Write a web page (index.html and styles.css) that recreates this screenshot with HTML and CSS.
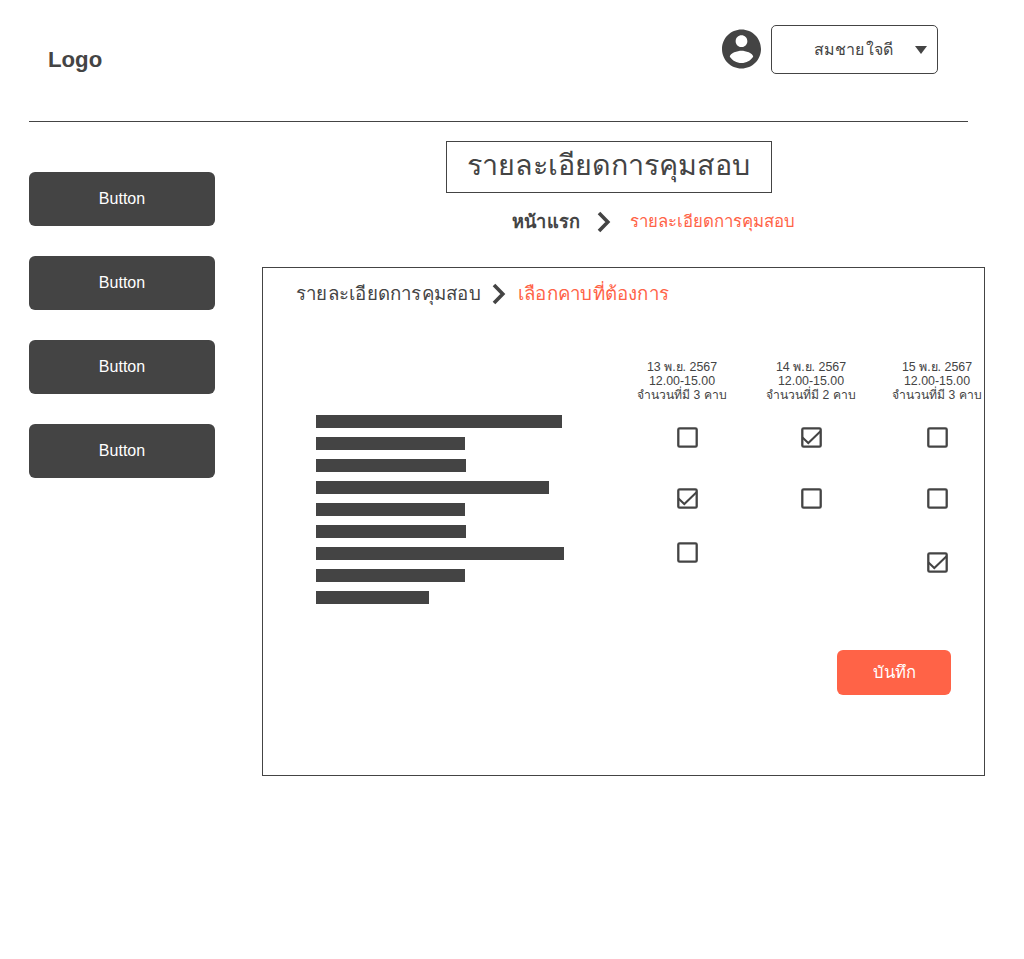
FILE: index.html
```html
<!DOCTYPE html>
<html lang="th">
<head>
<meta charset="utf-8">
<title>รายละเอียดการคุมสอบ</title>
<link rel="stylesheet" href="styles.css">
</head>
<body>
<svg class="defs" aria-hidden="true">
  <symbol id="box" viewBox="0 0 21 21"><rect x="1.3" y="1.300" width="18.400" height="18.400" rx="1.300" fill="none" stroke="#444" stroke-width="2.3"/></symbol>
  <symbol id="checked" viewBox="0 0 21 21"><rect x="1.3" y="1.300" width="18.400" height="18.400" rx="1.300" fill="none" stroke="#444" stroke-width="2.3"/><path d="M1.500 10.500L7.300 16L19.500 4.300" fill="none" stroke="#444" stroke-width="2"/></symbol>
  <symbol id="chevron" viewBox="0 0 14 22"><path d="M2 2L10.800 11L2 20" fill="none" stroke="#444" stroke-width="3.6"/></symbol>
</svg>
<header class="header">
  <div class="logo">Logo</div>
  <div class="account">
    <svg class="avatar" viewBox="2 2 20 20"><path fill="#444" d="M12 2C6.48 2 2 6.48 2 12s4.480 10 10 10 10-4.480 10-10S17.520 2 12 2zm0 3c1.660 0 3 1.340 3 3s-1.340 3-3 3-3-1.340-3-3 1.340-3 3-3zm0 14.200c-2.500 0-4.710-1.280-6-3.220.030-1.990 4-3.080 6-3.080 1.990 0 5.970 1.090 6 3.080-1.290 1.940-3.500 3.220-6 3.220z"/></svg>
    <div class="select"><span class="name">สมชาย ใจดี</span><svg class="caret" viewBox="0 0 12 8"><path d="M0 0H12L6 8Z" fill="#444"/></svg></div>
  </div>
</header>
<div class="layout">
  <nav class="sidebar">
    <button class="nav-button">Button</button>
    <button class="nav-button">Button</button>
    <button class="nav-button">Button</button>
    <button class="nav-button">Button</button>
  </nav>
  <main class="main">
    <h1 class="title">รายละเอียดการคุมสอบ</h1>
    <div class="crumbs">
      <b>หน้าแรก</b>
      <svg class="chevron"><use href="#chevron"/></svg>
      <span class="current">รายละเอียดการคุมสอบ</span>
    </div>
    <section class="panel">
      <div class="panel-crumbs">
        <span>รายละเอียดการคุมสอบ</span>
        <svg class="chevron"><use href="#chevron"/></svg>
        <span class="current">เลือกคาบที่ต้องการ</span>
      </div>
      <div class="schedule">
        <div class="lines">
          <i style="width:246px"></i><i style="width:149px"></i><i style="width:150px"></i>
          <i style="width:233px"></i><i style="width:149px"></i><i style="width:150px"></i>
          <i style="width:248px"></i><i style="width:149px"></i><i style="width:113px"></i>
        </div>
        <div class="slot first">
          <p>13 พ.ย. 2567<br>12.00-15.00<br><span class="count">จำนวนที่มี 3 คาบ</span></p>
          <svg class="check"><use href="#box"/></svg>
          <svg class="check"><use href="#checked"/></svg>
          <svg class="check near"><use href="#box"/></svg>
        </div>
        <div class="slot second">
          <p>14 พ.ย. 2567<br>12.00-15.00<br><span class="count">จำนวนที่มี 2 คาบ</span></p>
          <svg class="check"><use href="#checked"/></svg>
          <svg class="check"><use href="#box"/></svg>
        </div>
        <div class="slot third">
          <p>15 พ.ย. 2567<br>12.00-15.00<br><span class="count">จำนวนที่มี 3 คาบ</span></p>
          <svg class="check"><use href="#box"/></svg>
          <svg class="check"><use href="#box"/></svg>
          <svg class="check far"><use href="#checked"/></svg>
        </div>
      </div>
      <button class="save">บันทึก</button>
    </section>
  </main>
</div>
</body>
</html>
```
FILE: styles.css
```css
* { box-sizing: border-box; }
body { margin: 0; background: #fff; color: #444; font-family: "Liberation Sans", Arial, sans-serif; font-size: 16px; white-space: nowrap; }
.defs { display: none; }
svg { display: block; flex: none; }
button { border: 0; padding: 0; color: #fff; font: inherit; border-radius: 6px; }
.header { display: flex; justify-content: space-between; align-items: flex-start; width: 939px; height: 122px; margin-left: 29px; padding: 25px 30px 0 19px; border-bottom: 1px solid #444; }
.logo { margin-top: 21px; font-size: 22.2px; font-weight: bold; line-height: 28px; }
.account { display: flex; gap: 10px; }
.avatar { width: 39px; height: 40px; margin-top: 4px; }
.select { display: flex; align-items: center; justify-content: space-between; width: 167px; height: 49px; padding: 0 10px 0 42px; border: 1px solid #444; border-radius: 5px; }
.name { font-size: 16px; line-height: 20px; word-spacing: -2px; }
.caret { width: 12px; height: 8px; margin-top: 1px; }
.layout { display: flex; gap: 47px; margin-left: 29px; }
.sidebar { display: flex; flex-direction: column; gap: 30px; width: 186px; padding-top: 50px; }
.nav-button { height: 54px; background: #444; }
.main { width: 723px; padding-top: 19px; }
.title { width: 326px; height: 52px; margin: 0 0 0 184px; padding-right: 2px; border: 1px solid #444; font-size: 28.7px; font-weight: normal; line-height: 47px; text-align: center; }
.crumbs { display: flex; align-items: center; height: 22px; margin: 18px 0 0 250px; font-size: 16.8px; }
.crumbs b { width: 85px; padding-bottom: 2px; font-size: 18.2px; letter-spacing: 0.2px; }
.chevron { width: 14px; height: 22px; }
.crumbs .current { margin-left: 19px; padding-bottom: 3px; }
.current { color: #ff6347; }
.panel { display: flex; flex-direction: column; height: 509px; margin-top: 34px; border: 1px solid #444; }
.panel-crumbs { display: flex; align-items: center; height: 22px; margin: 15px 0 0 33px; font-size: 18.65px; letter-spacing: 0.22px; }
.panel-crumbs span { padding-bottom: 2px; }
.panel-crumbs span:first-child { width: 196px; }
.panel-crumbs .current { margin-left: 12px; }
.schedule { display: flex; height: 250px; margin-top: 55px; padding-left: 53px; }
.lines { display: flex; flex-direction: column; gap: 9px; width: 250px; padding-top: 55px; }
.lines i { height: 13px; background: #444; }
.slot { display: flex; flex-direction: column; align-items: center; width: 92px; }
.slot p { height: 42px; margin: 0; font-size: 12.4px; line-height: 14px; text-align: center; }
.count { font-size: 12.15px; }
.first { margin-left: 70px; }
.second { margin-left: 37px; }
.third { margin-left: 34px; }
.check { width: 21px; height: 21px; margin-top: 40px; }
.slot p + .check { margin-top: 25px; }
.first .check { margin-left: 10px; }
.check.near { margin-top: 33px; }
.check.far { margin-top: 43px; }
.save { width: 114px; height: 45px; margin: 40px 0 0 574px; padding-bottom: 2px; background: #ff6347; font-size: 16.6px; }
```
